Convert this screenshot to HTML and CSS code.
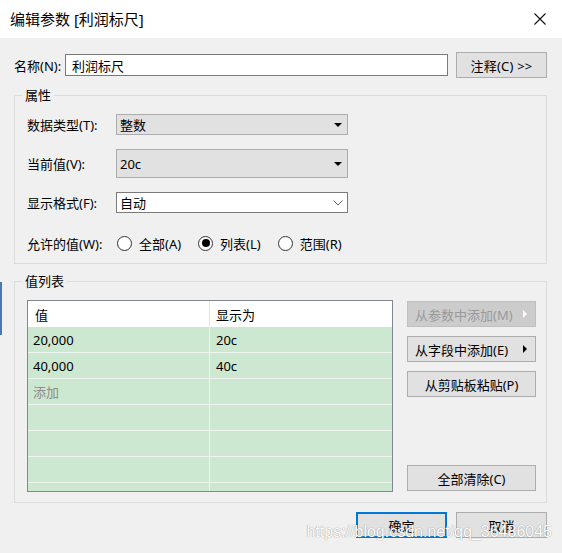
FILE: index.html
```html
<!DOCTYPE html>
<html lang="zh-CN">
<head>
  <meta charset="UTF-8">
  <title>编辑参数 [利润标尺]</title>
  <link rel="stylesheet" href="styles.css">
</head>
<body>
  <div class="titlebar">
    <span class="title">编辑参数 [利润标尺]</span>
    <svg class="close" viewBox="0 0 12 12" width="12" height="12">
      <path d="M0.5 0.5 L11.5 11.5 M11.5 0.5 L0.5 11.5" stroke="#111" stroke-width="1.1" fill="none"/>
    </svg>
  </div>

  <div class="main">
    <div class="name-row">
      <span class="name-label">名称(N):</span>
      <div class="textbox">利润标尺</div>
      <button class="btn note-btn">注释(C) &gt;&gt;</button>
    </div>

    <fieldset class="group props">
      <legend>属性</legend>
      <div class="field-row first">
        <span class="field-label">数据类型(T):</span>
        <div class="select">整数<span class="caret"></span></div>
      </div>
      <div class="field-row">
        <span class="field-label">当前值(V):</span>
        <div class="select tall">20c<span class="caret"></span></div>
      </div>
      <div class="field-row">
        <span class="field-label">显示格式(F):</span>
        <div class="select combo">自动
          <svg class="chevron" viewBox="0 0 10 6" width="10" height="6"><path d="M0.5 0.5 L5 5 L9.5 0.5" stroke="#666" fill="none"/></svg>
        </div>
      </div>
      <div class="field-row radios">
        <span class="field-label">允许的值(W):</span>
        <span class="radio"><span class="dot"></span>全部(A)</span>
        <span class="radio checked"><span class="dot"></span>列表(L)</span>
        <span class="radio"><span class="dot"></span>范围(R)</span>
      </div>
    </fieldset>

    <fieldset class="group values">
      <legend>值列表</legend>
      <div class="values-body">
        <div class="grid">
          <div class="grid-head">
            <div class="cell">值</div>
            <div class="cell">显示为</div>
          </div>
          <div class="grid-row"><div class="cell">20,000</div><div class="cell">20c</div></div>
          <div class="grid-row"><div class="cell">40,000</div><div class="cell">40c</div></div>
          <div class="grid-row"><div class="cell hint">添加</div><div class="cell"></div></div>
          <div class="grid-row"><div class="cell"></div><div class="cell"></div></div>
          <div class="grid-row"><div class="cell"></div><div class="cell"></div></div>
          <div class="grid-row"><div class="cell"></div><div class="cell"></div></div>
          <div class="grid-row"><div class="cell"></div><div class="cell"></div></div>
        </div>
        <div class="side">
          <button class="btn side-btn disabled">从参数中添加(M)<span class="arrow"></span></button>
          <button class="btn side-btn">从字段中添加(E)<span class="arrow"></span></button>
          <button class="btn">从剪贴板粘贴(P)</button>
          <button class="btn clear-btn">全部清除(C)</button>
        </div>
      </div>
    </fieldset>

    <div class="footer">
      <button class="btn primary">确定</button>
      <button class="btn">取消</button>
    </div>
  </div>

  <div class="edge-mark"></div>
  <div class="watermark">https://blog.csdn.net/qq_36486045</div>
</body>
</html>
```

FILE: styles.css
```css
* { box-sizing: border-box; }
body {
  margin: 0;
  width: 562px;
  height: 553px;
  overflow: hidden;
  position: relative;
  background: #f0f0f0;
  font-family: "Noto Sans", "Noto Sans CJK SC", sans-serif;
  font-size: 13px;
  color: #000;
}
.titlebar {
  height: 38px;
  background: #fff;
  display: flex; align-items: center; justify-content: space-between;
  padding: 0 16px 0 10px;
}
.title { font-size: 15px; line-height: 20px; }
.close { display: block; }

.main { padding: 14px 15px 0 14px; }

.name-row { display: flex; align-items: center; height: 26px; }
.name-label { width: 51px; }
.textbox {
  width: 383px; height: 22px;
  border: 1px solid #7a7a7a; background: #fff;
  padding-left: 6px;
  display: flex; align-items: center;
}
.btn {
  font: inherit; color: #000;
  height: 26px;
  background: #e1e1e1;
  border: 1px solid #adadad;
  padding: 0;
  display: flex; align-items: center; justify-content: center;
}
.note-btn { width: 91px; margin-left: 8px; letter-spacing: 0.2px; }

.group {
  margin: 8px 0 0;
  border: 1px solid #dcdcdc;
  min-width: 0;
}
.group legend { padding: 0 3px; margin-left: -5px; line-height: 18px; }
.props { padding: 0 10px 10px 12px; }
.field-row { display: flex; align-items: center; margin-top: 14px; }
.field-row.first { margin-top: 10px; }
.field-label { width: 89px; flex: none; }
.select {
  width: 232px; height: 21px;
  border: 1px solid #adadad; background: #e1e1e1;
  padding: 0 5px 0 3px;
  display: flex; align-items: center; justify-content: space-between;
}
.select.tall { height: 29px; }
.select.combo { background: #fff; border-color: #7a7a7a; padding-right: 4px; }
.caret {
  width: 0; height: 0;
  border-left: 4px solid transparent;
  border-right: 4px solid transparent;
  border-top: 4px solid #000;
}
.chevron { display: block; }

.radios { margin-top: 20px; height: 20px; }
.radios .field-label { width: 90px; }
.radio { display: flex; align-items: center; gap: 7px; margin-right: 17px; }
.dot {
  width: 15px; height: 15px;
  border: 1px solid #333; border-radius: 50%;
  background: #fff;
  display: flex; align-items: center; justify-content: center;
}
.radio.checked .dot::after {
  content: ""; width: 8px; height: 8px; border-radius: 50%; background: #000;
}

.values { padding: 10px 10px 10px 12px; }
.values-body { display: flex; gap: 14px; }
.grid {
  width: 366px; height: 192px;
  border: 1px solid #828790;
  background: #cde8d0;
  overflow: hidden;
}
.grid-head { display: flex; height: 26px; background: #fff; }
.grid-row { display: flex; height: 26px; border-bottom: 1px solid #f1f5f1; }
.cell { display: flex; align-items: center; padding-left: 6px; }
.cell:first-child { width: 182px; flex: none; padding-left: 5px; border-right: 1px solid #f1f5f1; }
.grid-head .cell:first-child { border-right-color: #e5e5e5; padding-left: 7px; }
.cell.hint { color: #8c8c8c; }

.side { width: 129px; display: flex; flex-direction: column; gap: 9px; padding: 1px 0; }
.side-btn { justify-content: space-between; padding: 0 8px 0 7px; }
.arrow {
  width: 0; height: 0;
  border-top: 4px solid transparent;
  border-bottom: 4px solid transparent;
  border-left: 4px solid #000;
}
.btn.disabled { background: #cccccc; border-color: #bfbfbf; color: #9a9a9a; }
.btn.disabled .arrow { border-left-color: #fff; }
.clear-btn { margin-top: auto; }

.footer { display: flex; justify-content: flex-end; gap: 9px; margin-top: 9px; }
.footer .btn { width: 91px; }
.btn.primary { border: 2px solid #0078d7; }

.edge-mark {
  position: absolute; left: 0; top: 282px;
  width: 2px; height: 53px;
  background: #4a78b0;
}
.watermark {
  position: absolute; right: 10px; bottom: 13px;
  font-family: "Liberation Sans", Arial, sans-serif;
  font-size: 16px; line-height: 16px;
  color: #fff;
  text-shadow: 0 0 1px rgba(60,60,60,0.7);
  white-space: nowrap;
}
```
